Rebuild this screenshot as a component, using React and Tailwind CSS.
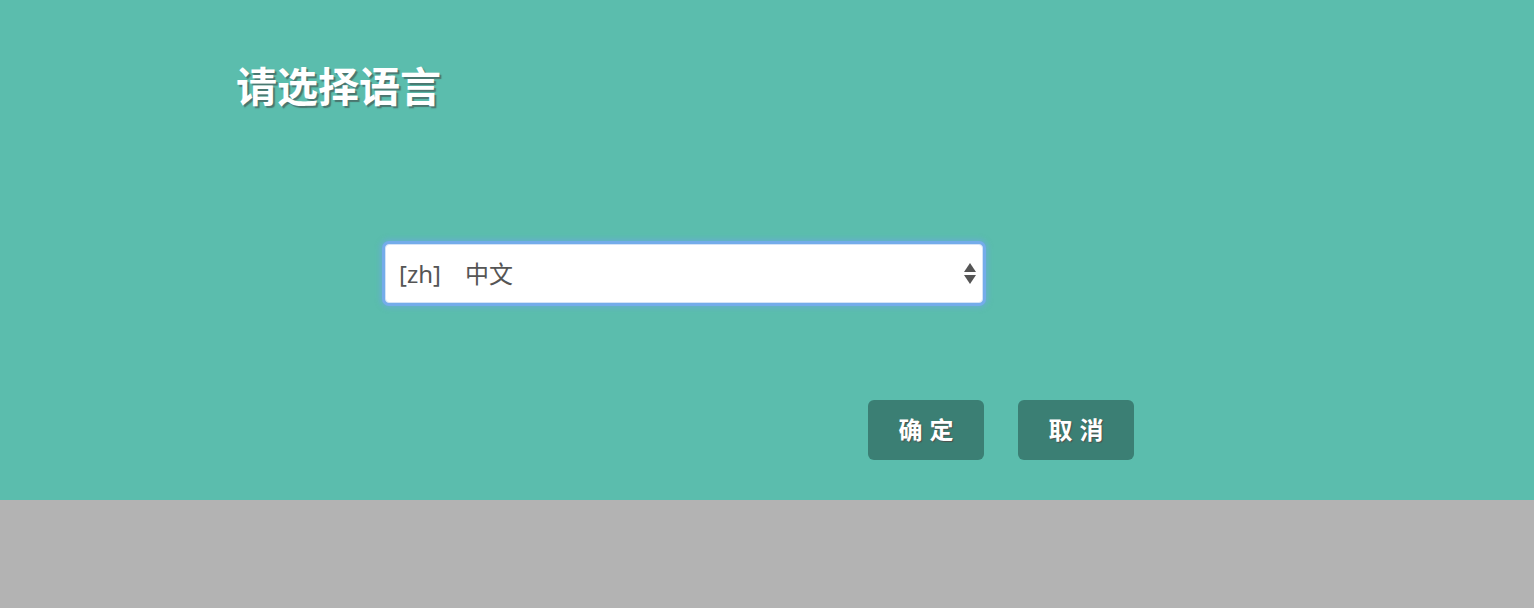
import React from "react";

export default function App() {
  const font = { fontFamily: '"Noto Sans", "Noto Sans CJK SC", sans-serif' };
  return (
    <div className="w-[1534px] h-[608px] flex flex-col bg-[#b3b3b3]" style={font}>
      {/* Dialog panel */}
      <div className="h-[500px] bg-[#5bbdad] flex flex-col">
        <h1 className="ml-[236px] mt-[58px] text-[41px] leading-[56px] font-bold text-white [text-shadow:2px_2px_1px_rgba(60,60,60,0.55)]">
          请选择语言
        </h1>

        {/* Language select */}
        <div className="ml-[382px] mt-[127px] w-[604px] h-[65px] rounded-[7px] bg-[#74acea] p-[3px] shadow-[0_0_5px_2px_rgba(110,165,230,0.55)]">
          <div className="h-full rounded-[4px] bg-white border border-[#d3e3f7] flex items-center pl-[13px] pr-[6px]">
            <span className="flex-1 text-[24px] text-[#555]">[zh]　中文</span>
            <span className="flex flex-col items-center gap-[3px]">
              <svg width="12" height="9" viewBox="0 0 12 9"><path d="M6 0L12 9H0Z" fill="#555" /></svg>
              <svg width="12" height="9" viewBox="0 0 12 9"><path d="M0 0H12L6 9Z" fill="#555" /></svg>
            </span>
          </div>
        </div>

        {/* Actions */}
        <div className="ml-[868px] mt-[94px] flex gap-[34px]">
          <button className="w-[116px] h-[60px] rounded-[6px] bg-[#3b7f74] text-white text-[24px] font-bold tracking-[7px] pl-[7px] [text-shadow:1px_1px_1px_rgba(90,60,60,0.7)]">
            确定
          </button>
          <button className="w-[116px] h-[60px] rounded-[6px] bg-[#3b7f74] text-white text-[24px] font-bold tracking-[7px] pl-[7px] [text-shadow:1px_1px_1px_rgba(90,60,60,0.7)]">
            取消
          </button>
        </div>
      </div>
    </div>
  );
}
